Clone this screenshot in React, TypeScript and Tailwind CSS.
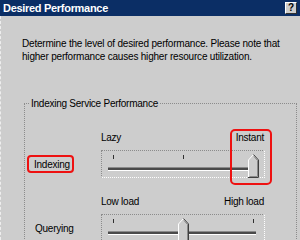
import React from 'react';

const Thumb = ({ left }: { left: number }) => (
  <svg
    className="absolute top-[3px]"
    style={{ left }}
    width="11"
    height="24"
    viewBox="0 0 11 24"
  >
    <path d="M0.5 23 L0.5 6 L5.5 0.5 L10.5 6 L10.5 23 Z" fill="#cdcdcd" />
    <path d="M0.5 23 L0.5 6 L5.5 0.5" fill="none" stroke="#ffffff" strokeWidth="1" />
    <path d="M5.5 0.5 L10.5 6 L10.5 23.5 L0 23.5" fill="none" stroke="#404040" strokeWidth="1" />
    <path d="M6 2.5 L9.5 6.5 L9.5 22.5 L1.5 22.5" fill="none" stroke="#8a8a8a" strokeWidth="1" />
  </svg>
);

const Slider = ({ thumb }: { thumb: number }) => (
  <div className="relative w-[164px] h-[28px] border-t border-l border-dotted border-[#8c8c8c] border-b border-r border-b-white border-r-white">
    {[11, 81, 151].map((x) => (
      <div key={x} className="absolute top-[4px] w-[1px] h-[4px] bg-[#303030]" style={{ left: x }} />
    ))}
    <div className="absolute left-[6px] top-[16px] w-[148px] h-[4px] border-t border-[#8a8a8a] bg-[#4a4a4a] border-b border-b-white" />
    <Thumb left={thumb} />
  </div>
);

const App = () => {
  return (
    <div className="relative w-[300px] h-[240px] overflow-hidden bg-[#cdcdcd] font-['Liberation_Sans',Arial,sans-serif] text-[10px] tracking-[-0.25px] leading-[13px] text-black">
      {/* title bar */}
      <div className="h-[16px] bg-[#0b2e65] flex items-center justify-between pl-[3px] pr-[3px]">
        <span className="font-bold text-white text-[11px] tracking-[-0.3px]">Desired Performance</span>
        <div className="w-[12px] h-[12px] bg-[#cdcdcd] border-t border-l border-white border-b border-r border-b-[#303030] border-r-[#303030] flex items-center justify-center font-bold text-[10px] leading-none tracking-normal">
          ?
        </div>
      </div>

      <div className="h-[224px] border-l border-dashed border-[#eeeeee]">
        <p className="pt-[21px] pl-[21px] whitespace-nowrap tracking-[-0.2px]">
          Determine the level of desired performance. Please note that
          <br />
          higher performance causes higher resource utilization.
        </p>

        <div className="mt-[40px] ml-[23px] mr-[3px] h-[200px] border-t border-l border-r border-dotted border-[#8c8c8c]">
          <div className="-mt-[7px] ml-[5px] px-[1px] w-fit bg-[#cdcdcd] whitespace-nowrap">Indexing Service Performance</div>

          <div className="grid grid-cols-[76px_164px] mt-[21px] whitespace-nowrap">
            <div />
            <div className="flex justify-between pr-[1px]">
              <span>Lazy</span>
              <span>Instant</span>
            </div>
            <div className="flex items-center pl-[9px] mt-[6px]">Indexing</div>
            <div className="mt-[6px]">
              <Slider thumb={146} />
            </div>

            <div />
            <div className="flex justify-between pr-[1px] mt-[17px]">
              <span>Low load</span>
              <span>High load</span>
            </div>
            <div className="flex items-center pl-[10px] mt-[6px]">Querying</div>
            <div className="mt-[6px]">
              <Slider thumb={76} />
            </div>
          </div>
        </div>
      </div>

      {/* red highlight callouts */}
      <div className="absolute left-[27px] top-[155px] w-[47px] h-[18px] border-2 border-[#ee1111] rounded-[4px]" />
      <div className="absolute left-[230px] top-[129px] w-[42px] h-[56px] border-2 border-[#ee1111] rounded-[5px]" />
    </div>
  );
};

export default App;
